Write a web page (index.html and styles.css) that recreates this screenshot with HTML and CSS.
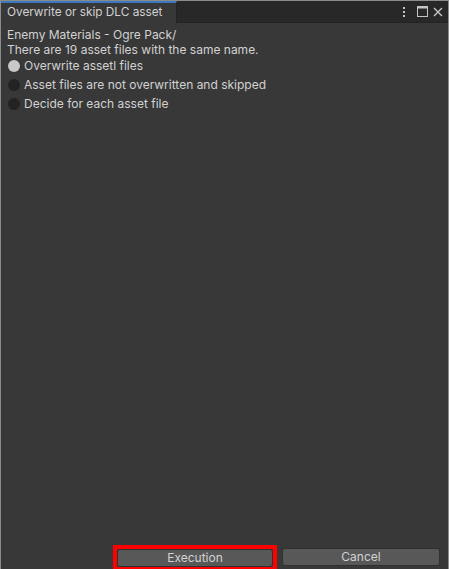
FILE: index.html
```html
<!DOCTYPE html>
<html>
<head>
<meta charset="utf-8">
<link rel="stylesheet" href="styles.css">
</head>
<body>
<div class="window">
  <div class="tabbar">
    <div class="tab">Overwrite or skip DLC asset</div>
    <div class="tools">
      <svg class="ico kebab" width="6" height="12" viewBox="0 0 6 12"><rect x="2" y="1" width="2" height="2" fill="#c4c4c4"/><rect x="2" y="5" width="2" height="2" fill="#c4c4c4"/><rect x="2" y="9" width="2" height="2" fill="#c4c4c4"/></svg>
      <svg class="ico" width="11" height="11" viewBox="0 0 11 11"><rect x="0.5" y="0.5" width="10" height="10" fill="none" stroke="#c4c4c4"/><rect x="0" y="0" width="11" height="2.5" fill="#c4c4c4"/></svg>
      <svg class="ico close" width="10" height="10" viewBox="0 0 10 10"><path d="M1 1 L9 9 M9 1 L1 9" stroke="#c4c4c4" stroke-width="1.4"/></svg>
    </div>
  </div>
  <div class="content">
    <div class="line">Enemy Materials - Ogre Pack/</div>
    <div class="line">There are 19 asset files with the same name.</div>
    <div class="options">
      <label class="opt"><span class="radio on"></span>Overwrite assetl files</label>
      <label class="opt"><span class="radio"></span>Asset files are not overwritten and skipped</label>
      <label class="opt"><span class="radio"></span>Decide for each asset file</label>
    </div>
    <div class="spacer"></div>
    <div class="buttons">
      <div class="hl"><div class="btn">Execution</div></div>
      <div class="btn cancel">Cancel</div>
    </div>
  </div>
</div>
</body>
</html>
```
FILE: styles.css
```css
html, body { margin: 0; padding: 0; background: #383838; }
body { width: 449px; height: 569px; overflow: hidden; font-family: Inter, "Noto Sans", sans-serif; }
.window {
  box-sizing: border-box;
  width: 449px; height: 569px;
  border: 1px solid #8c8c8c;
  border-bottom: none;
  display: flex; flex-direction: column;
  background: #383838;
}
.tabbar {
  height: 21px; flex: none;
  background: #282828;
  display: flex; align-items: stretch;
  border-bottom: 1px solid #232323;
  box-sizing: content-box;
}
.tab {
  width: 176px;
  box-sizing: border-box;
  background: #383838;
  border-top: 2px solid #3a79bb;
  border-right: 1px solid #232323;
  color: #d2d2d2;
  font-size: 11.8px;
  white-space: nowrap;
  padding: 1px 0 0 6px;
  line-height: 17px;
  margin-bottom: -1px;
}
.tools { margin-left: auto; display: flex; align-items: center; padding-right: 5px; }
.kebab { margin-right: 10px; }
.close { margin-left: 5px; }
.ico { display: block; }
.content {
  flex: 1;
  display: flex; flex-direction: column;
  padding: 4px 0 0 6px;
  color: #d2d2d2;
  font-size: 12px;
}
.line { line-height: 15px; }
.options { display: flex; flex-direction: column; margin-top: -1px; }
.opt { display: flex; align-items: center; height: 19px; gap: 4px; margin-left: 1px; }
.radio {
  width: 12px; height: 12px; border-radius: 50%;
  background: #232323; flex: none;
}
.radio.on { background: #c8c8c8; }
.spacer { flex: 1; }
.buttons { display: flex; gap: 5px; padding-left: 106px; padding-right: 8px; height: 24px; align-items: flex-start; }
.hl { border: 4px solid #ff0000; border-bottom-width: 2px; width: 156px; }
.btn {
  height: 18px; box-sizing: border-box;
  background: #585858; border: 1px solid #303030; border-radius: 3px;
  color: #d2d2d2; text-align: center; line-height: 16px; font-size: 12px;
}
.cancel { width: 158px; margin-top: 3px; }
```
